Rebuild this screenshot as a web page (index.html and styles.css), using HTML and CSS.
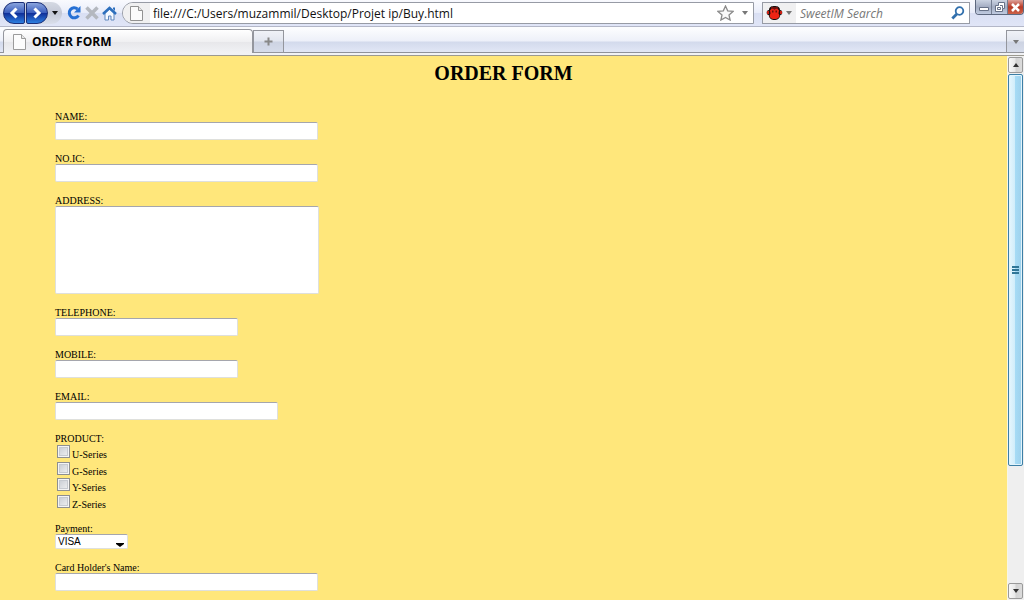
FILE: index.html
```html
<!DOCTYPE html>
<html lang="en">
<head>
<meta charset="utf-8">
<title>ORDER FORM</title>
<link rel="stylesheet" href="styles.css">
</head>
<body>
<header class="toolbar">
  <div class="history">
    <button class="nav-btn nav-back" aria-label="Back"><svg width="20" height="20" viewBox="0 0 20 20"><path d="M12.500 5.500L8 10l4.500 4.500" fill="none" stroke="#fff" stroke-width="3"/></svg></button>
    <button class="nav-btn nav-forward" aria-label="Forward"><svg width="20" height="20" viewBox="0 0 20 20"><path d="M7.500 5.500L12 10l-4.500 4.500" fill="none" stroke="#fff" stroke-width="3"/></svg></button>
    <button class="nav-menu" aria-label="Recent pages"><svg width="6" height="4" viewBox="0 0 6 4"><path d="M0 0h6L3 4z" fill="#111"/></svg></button>
  </div>
  <div class="actions">
    <button class="plain" aria-label="Reload"><svg width="16" height="16" viewBox="0 0 16 16"><path d="M11.500 4A5 5 0 1 0 12.500 10.500" fill="none" stroke="#2670d4" stroke-width="3"/><path d="M14.500 1v6.500H8z" fill="#2670d4"/></svg></button>
    <button class="plain" aria-label="Stop"><svg width="14" height="14" viewBox="0 0 14 14"><path d="M1.500 1.500l11 11M12.500 1.500l-11 11" stroke="#b4b8bf" stroke-width="3.500"/></svg></button>
    <button class="plain" aria-label="Home"><svg width="15" height="15" viewBox="0 0 15 15"><path d="M3 7v7h3.500v-4h2.500v4h3V7L7.500 3z" fill="#f5f9ff" stroke="#5f87bd"/><path d="M1 8l6.500-6L14 8" fill="none" stroke="#2d6fbd" stroke-width="2.500"/><path d="M11 1.500h2V5l-2-2z" fill="#2d6fbd"/></svg></button>
  </div>
  <div class="address">
    <span class="site-icon"><svg width="13" height="15" viewBox="0 0 13 15"><path d="M.5.5h8l4 4v10H.5z" fill="#fbfbfb" stroke="#929292"/><path d="M8.500.5v4h4" fill="#e8e8e8" stroke="#929292"/></svg></span>
    <input class="url" type="text" aria-label="Address" value="file:///C:/Users/muzammil/Desktop/Projet ip/Buy.html">
    <button class="plain" aria-label="Bookmark"><svg width="17" height="16" viewBox="0 0 17 16"><path d="M8.500 1l2.200 4.800 5.300.6-4 3.500 1.100 5.100-4.600-2.600L3.900 15 5 9.900 1 6.400l5.300-.6z" fill="#fafafa" stroke="#8b8b8b" stroke-width="1.300"/></svg></button>
    <button class="plain" aria-label="Show history"><svg width="6" height="4" viewBox="0 0 6 4"><path d="M0 0h6L3 4z" fill="#777"/></svg></button>
  </div>
  <div class="search">
    <button class="engine" aria-label="Search engine"><svg width="17" height="16" viewBox="0 0 17 16"><path d="M3 5C3 1.500 6 1 8.500 1S14 1.500 14 5c3 0 3 5 .3 5C13.800 14 11 15 8.500 15S3.200 14 2.700 10C0 10 0 5 3 5z" fill="#160b09"/><path d="M4 5.500c1-2 3-2 4.500-1 1.500-1 3.500-1 4.500 1l-.5 3C15 12 12 14 8.500 14S2 12 4.500 8.500z" fill="#ee2414"/><path d="M1 6h2v3H1zM14 6h2v3h-2zM5 2.500h7v1H5z" fill="#c81e12"/><path d="M6 5.500h1.500v2H6zM9.500 5.500H11v2H9.500z" fill="#67100b"/></svg><svg width="6" height="4" viewBox="0 0 6 4"><path d="M0 0h6L3 4z" fill="#777"/></svg></button>
    <input class="query" type="text" aria-label="Search" placeholder="SweetIM Search">
    <button class="plain" aria-label="Search"><svg width="14" height="14" viewBox="0 0 14 14"><circle cx="8.500" cy="5" r="3.800" fill="#fff" stroke="#3270ad" stroke-width="1.800"/><path d="M5.800 8L1.300 12.500" stroke="#3270ad" stroke-width="2.800"/></svg></button>
  </div>
  <div class="window-controls">
    <button class="win" aria-label="Minimize"><svg width="10" height="9" viewBox="0 0 10 9"><path d="M.5 4.500h9v3h-9z" fill="#fff" stroke="#667187"/></svg></button>
    <button class="win" aria-label="Restore"><svg width="10" height="10" viewBox="0 0 10 10"><path d="M3.500.5h6v6h-2v3h-7v-6h3z" fill="#fff" stroke="#667187"/><path d="M2.500 5.500h3v2h-3zM5 3.500h2.500V6" fill="none" stroke="#667187"/></svg></button>
    <button class="win win-close" aria-label="Close"><svg width="11" height="9" viewBox="0 0 11 9"><path d="M2 1l7 7M9 1L2 8" stroke="#fff" stroke-width="2.600"/></svg></button>
  </div>
</header>
<nav class="tabs">
  <button class="tab"><svg width="13" height="16" viewBox="0 0 13 16"><path d="M.5.5h8l4 4v11H.5z" fill="#fcfcfc" stroke="#9b9b9b"/><path d="M8.500.5v4h4" fill="#e8e8e8" stroke="#9b9b9b"/></svg>ORDER FORM</button>
  <button class="new-tab" aria-label="New tab"><svg width="9" height="9" viewBox="0 0 9 9"><path d="M4.500.5v8M.5 4.500h8" stroke="#888" stroke-width="2"/></svg></button>
  <button class="all-tabs" aria-label="List all tabs"><svg width="6" height="4" viewBox="0 0 6 4"><path d="M0 0h6L3 4z" fill="#777"/></svg></button>
</nav>
<div class="viewport">
  <main class="page">
    <h1 class="title">ORDER FORM</h1>
    <form class="order">
      <div class="field"><label class="caption" for="name">NAME:</label><input class="box wide" id="name" type="text"></div>
      <div class="field"><label class="caption" for="ic">NO.IC:</label><input class="box wide" id="ic" type="text"></div>
      <div class="field"><label class="caption" for="address">ADDRESS:</label><textarea class="box area" id="address"></textarea></div>
      <div class="field"><label class="caption" for="telephone">TELEPHONE:</label><input class="box short" id="telephone" type="tel"></div>
      <div class="field"><label class="caption" for="mobile">MOBILE:</label><input class="box short" id="mobile" type="tel"></div>
      <div class="field"><label class="caption" for="email">EMAIL:</label><input class="box medium" id="email" type="email"></div>
      <div class="field" role="group" aria-labelledby="product">
        <span class="caption" id="product">PRODUCT:</span>
        <div class="products">
          <label class="option"><input class="check" type="checkbox"><span class="option-text">U-Series</span></label>
          <label class="option"><input class="check" type="checkbox"><span class="option-text">G-Series</span></label>
          <label class="option"><input class="check" type="checkbox"><span class="option-text">Y-Series</span></label>
          <label class="option"><input class="check" type="checkbox"><span class="option-text">Z-Series</span></label>
        </div>
      </div>
      <div class="field"><label class="caption" for="payment">Payment:</label><div class="select-wrap"><select class="box payment" id="payment"><option>VISA</option></select><svg class="select-arrow" width="8" height="4" viewBox="0 0 8 4"><path d="M0 0h8v1L4 4 0 1z" fill="#000"/></svg></div></div>
      <div class="field"><label class="caption" for="holder">Card Holder's Name:</label><input class="box wide" id="holder" type="text"></div>
    </form>
  </main>
  <div class="scrollbar">
    <button class="scroll-btn" aria-label="Scroll up"><svg width="6" height="4" viewBox="0 0 6 4"><path d="M0 4h6L3 0z" fill="#333"/></svg></button>
    <div class="track"><div class="thumb"><svg width="7" height="8" viewBox="0 0 7 8"><path d="M0 1h7M0 4h7M0 7h7" stroke="#2f7698" stroke-width="2"/></svg></div></div>
    <button class="scroll-btn" aria-label="Scroll down"><svg width="6" height="4" viewBox="0 0 6 4"><path d="M0 0h6L3 4z" fill="#333"/></svg></button>
  </div>
</div>
</body>
</html>
```
FILE: styles.css
```css
* { box-sizing: border-box; }
body {
  margin: 0;
  height: 100vh;
  display: flex;
  flex-direction: column;
  overflow: hidden;
  font-family: "Open Sans", "Noto Sans", sans-serif;
  font-size: 12px;
}
button { padding: 0; border: 0; background: none; font: inherit; color: inherit; }
svg { display: block; flex: none; }
.plain { display: flex; }

.toolbar {
  display: flex;
  flex: none;
  align-items: flex-start;
  height: 27px;
  padding: 2px 0 0 3px;
  background: linear-gradient(#f9fafe, #e9edfa 48%, #d9dff3 52%, #e0e5f7);
  border-bottom: 1px solid #b3b7c8;
}
.history {
  display: flex;
  height: 22px;
  border-radius: 11px;
  background: linear-gradient(#d5d9e3, #c3c8d6 50%, #dadfeb);
}
.nav-btn {
  display: flex;
  align-items: center;
  justify-content: center;
  width: 22px;
  border: 1px solid #1b2f78;
  background: linear-gradient(#8aa4de, #3c5fbd 48%, #10309a 52%, #2d7fe0);
}
.nav-back { border-radius: 11px 2px 2px 11px; }
.nav-forward { margin-left: 1px; border-radius: 2px 11px 11px 2px; }
.nav-menu { display: flex; width: 14px; align-items: center; justify-content: center; }
.actions { display: flex; align-items: center; gap: 3px; height: 22px; padding: 0 5px 0 4px; }
.address {
  display: flex;
  flex: 1;
  align-items: center;
  gap: 8px;
  height: 22px;
  padding-right: 5px;
  overflow: hidden;
  border: 1px solid #979ba5;
  border-radius: 11px 0 0 11px;
  background: #fff;
}
.site-icon {
  display: flex;
  align-items: center;
  justify-content: center;
  width: 27px;
  height: 20px;
  margin-right: -5px;
  background: #f0f0f1;
}
.url, .query { flex: 1; min-width: 0; height: 20px; padding: 0; border: 0; outline: 0; background: none; font: inherit; color: #111; }
.search {
  display: flex;
  align-items: center;
  width: 208px;
  height: 22px;
  margin-left: 8px;
  padding-right: 4px;
  border: 1px solid #979ba5;
  background: #fff;
}
.engine { display: flex; align-items: center; gap: 3px; width: 33px; height: 20px; padding-left: 3px; background: #f0f0f1; }
.query { padding-left: 4px; font-style: italic; }
.query::placeholder { color: #777; opacity: 1; }
.window-controls { display: flex; height: 15px; margin: -2px 0 0 5px; border: 1px solid #5d687e; border-top: 0; border-radius: 0 0 4px 4px; overflow: hidden; }
.win { display: flex; width: 16px; align-items: center; justify-content: center; border-right: 1px solid #737d91; background: linear-gradient(#cbd3e2, #a3adc2 50%, #bfcae0); }
.win-close { width: 15px; border: 0; background: linear-gradient(#dda29b, #b93a26 50%, #cc6249); }

.tabs {
  display: flex;
  flex: none;
  height: 29px;
  padding: 2px 0 0 3px;
  background: linear-gradient(#fbfcfe 2px, #edf0f9 14px, #d3daec 15px, #e2e7f6 25px, #8f929b 25px, #8f929b 26px, #f1f2f5 26px, #f1f2f5 28px, #9c9a90 28px);
}
.tab {
  display: flex;
  align-items: center;
  gap: 6px;
  width: 250px;
  height: 24px;
  padding-left: 9px;
  border: 1px solid #94969d;
  border-bottom: 0;
  border-radius: 4px 4px 0 0;
  background: linear-gradient(#fff, #f0f0f2 50%, #e7e7ea 52%, #f1f2f5);
  font-weight: bold;
}
.new-tab, .all-tabs { display: flex; align-items: center; justify-content: center; border: 1px solid #94969d; background: linear-gradient(#f0f2f7, #e2e6ef 48%, #cdd3e2 52%, #d6dcea); }
.new-tab { width: 31px; height: 23px; margin-top: 1px; }
.all-tabs { width: 18px; height: 23px; margin: 1px 0 0 auto; border-right: 0; }

.viewport { display: flex; flex: 1; min-height: 0; }
.page {
  flex: 1;
  overflow: hidden;
  background: #ffe77b;
  font-family: "Liberation Serif", serif;
  font-size: 10px;
  line-height: 12px;
  color: #000;
}
.title { margin: 6px 0 25px; font-size: 20px; line-height: 23px; text-align: center; }
.order { display: flex; flex-direction: column; gap: 12px; padding-left: 55px; }
.field { display: flex; flex-direction: column; align-items: flex-start; }
.caption { height: 12px; line-height: 14px; }
.box {
  height: 18px;
  margin: 0;
  padding: 0 2px;
  border: 1px solid #dfe0dc;
  border-top-color: #a5a6ad;
  border-radius: 2px;
  outline: 0;
  background: #fff;
  color: #000;
}
.wide { width: 263px; }
.medium { width: 223px; }
.short { width: 183px; }
.area { width: 264px; height: 88px; resize: none; }
.products { display: flex; flex-direction: column; height: 66px; justify-content: space-between; }
.option { display: flex; align-items: flex-start; gap: 2px; height: 16px; padding-left: 2px; }
.option-text { padding-top: 5px; }
.check {
  appearance: none;
  width: 13px;
  height: 13px;
  margin: 1px 0 0;
  border: 1px solid #8e8f8f;
  background: linear-gradient(135deg, #c3c8cf, #f4f4f4);
  box-shadow: inset 0 0 0 1px #f4f4f4, inset 0 0 0 2px #c6cad0;
}
.select-wrap { position: relative; display: flex; }
.payment { appearance: none; width: 73px; height: 15px; font-family: "Liberation Sans", sans-serif; font-size: 10px; line-height: 12px; }
.select-arrow { position: absolute; right: 4px; bottom: 2px; pointer-events: none; }

.scrollbar { display: flex; flex: none; flex-direction: column; width: 17px; padding: 1px 1px 1px 0; border-left: 1px solid #f8f6e6; background: #efefef; }
.scroll-btn { display: flex; flex: none; align-items: center; justify-content: center; height: 16px; border: 1px solid #9a9a9a; border-radius: 2px; background: linear-gradient(90deg, #f8f8f8, #e8e8e8 48%, #d2d2d2 52%, #dcdcdc); }
.track { flex: 1; padding-top: 1px; }
.thumb { display: flex; align-items: center; justify-content: center; height: 77%; border: 1px solid #3c7fa6; border-radius: 2px; background: linear-gradient(90deg, #e6f6fd, #d0edfb 46%, #a6dbf5 50%, #9dd0ec); box-shadow: inset 0 0 0 1px #e2f4fc; }
```
